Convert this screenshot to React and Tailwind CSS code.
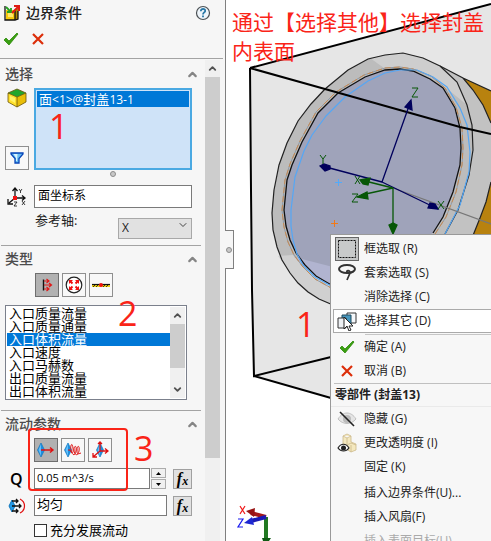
import React from "react";
import { ChevronDown, ChevronUp } from "lucide-react";

const ui = "font-['Open_Sans','Noto_Sans_CJK_SC',sans-serif]";

function Check() {
  return (
    <svg width="16" height="14" viewBox="0 0 16 14" aria-hidden="true">
      <path d="M1 8 3 6l3 3 8-8 1 1-9 11Z" fill="#3a9f12" stroke="#2c8a08" strokeWidth=".8" />
    </svg>
  );
}

function Cross() {
  return (
    <svg width="12" height="12" viewBox="0 0 12 12" aria-hidden="true">
      <path d="M1 1l10 10M11 1 1 11" stroke="#dc2e0a" strokeWidth="2.2" />
    </svg>
  );
}

function TitleIcon() {
  return (
    <svg width="16" height="16" viewBox="0 0 16 16" aria-hidden="true">
      <path d="M2 5h9v10H2z" fill="#f7c90c" />
      <path d="M11 5l3-2v11l-3 1z" fill="#ad8500" />
      <path d="M4 7h5v5H4z" fill="#ffe769" />
      <path d="M1 1v14h10l3-1V6M11 6v9" stroke="#111" strokeWidth="1.3" fill="none" />
      <path d="M2 2l5 5M3 7h4V3" stroke="#25a020" strokeWidth="1.8" fill="none" />
      <path d="M8 8l6-6M10 1h5v5" stroke="#df1a12" strokeWidth="2" fill="none" />
    </svg>
  );
}

function HelpIcon() {
  return (
    <svg width="16" height="16" viewBox="0 0 16 16" aria-hidden="true">
      <circle cx="8" cy="8" r="6.5" fill="#eef5fb" stroke="#4b5054" strokeWidth="1.2" />
      <path d="M5.8 6.2c0-3.1 4.8-2.8 4.4-.2C10 7.4 8 7.6 8 9.4" fill="none" stroke="#2676a5" strokeWidth="1.7" />
      <path d="M7.1 10.6h1.8v1.7H7.1z" fill="#2676a5" />
    </svg>
  );
}

function CubeIcon() {
  return (
    <svg width="20" height="20" viewBox="0 0 20 20" aria-hidden="true">
      <path d="M1 5l9 4v10l-9-5z" fill="#ffe02b" />
      <path d="M19 5l-9 4v10l9-5z" fill="#e9be08" />
      <path d="M1 5l9-4 9 4-9 4z" fill="#22a62c" />
      <path d="M1 5l9-4 9 4v9l-9 5-9-5zM10 9v10M1 5l9 4 9-4" fill="none" stroke="#6c5408" strokeWidth=".8" />
      <path d="M3 8l5 2v5l-5-3z" fill="#fff36b" />
    </svg>
  );
}

function FilterIcon() {
  return (
    <svg width="14" height="14" viewBox="0 0 14 14" aria-hidden="true">
      <path d="M1 2h12v1L9 7.5V12H5V7.5L1 3z" fill="#66bdf2" stroke="#0744b8" strokeWidth="1.3" />
      <path d="M3.5 3h4L7 10H6V7z" fill="#d8f3ff" />
    </svg>
  );
}

function AxesIcon() {
  return (
    <svg width="20" height="20" viewBox="0 0 20 20" aria-hidden="true">
      <path d="M8 11V1M5.5 4 8 1l2.5 3M8 11h9M15 8.5l3 2.5-3 2.5M8 11l-6 5M1 12v5h5" fill="none" stroke="#111" strokeWidth="1.3" />
      <path d="M12 2l1.500 2L15 2M13.500 4v2M15 14l3 4M18 14l-3 4M7 15h3l-3 4h3" fill="none" stroke="#111" strokeWidth=".8" />
      <path d="M6 9h4v4H6z" fill="#f01010" />
    </svg>
  );
}

function InletIcon() {
  return (
    <svg width="16" height="16" viewBox="0 0 16 16" aria-hidden="true">
      <path d="M4.500 2.500v11" stroke="#111" strokeWidth="1.4" />
      <path d="M5 4h4M5 8h7M5 12h4M7.500 2l2.500 2-2.500 2M10 6l2.500 2-2.500 2M7.500 10l2.500 2-2.500 2" fill="none" stroke="#e01818" strokeWidth="1.2" />
    </svg>
  );
}

function PressureIcon() {
  return (
    <svg width="18" height="18" viewBox="0 0 18 18" aria-hidden="true">
      <circle cx="9" cy="9" r="7.800" fill="#fff" stroke="#222" strokeWidth="1.200" />
      <path d="M7.500 7.500l-3-3M10.500 7.500l3-3M7.500 10.500l-3 3M10.500 10.500l3 3" fill="none" stroke="#f01010" strokeWidth="2" />
      <path d="M4 4h4L4 8zM14 4v4l-4-4zM14 14h-4l4-4zM4 14v-4l4 4z" fill="#f01010" />
    </svg>
  );
}

function WallIcon() {
  return (
    <svg width="20" height="10" viewBox="0 0 20 10" aria-hidden="true">
      <path d="M1 5h18v2H1z" fill="#edd016" />
      <path d="M1 4.500h18" stroke="#111" strokeWidth="1.200" />
      <path d="M2 7l2-2M5 7l2-2M12 7l2-2M15 7l2-2" stroke="#111" strokeWidth=".8" />
      <circle cx="10" cy="5" r="2" fill="#f01010" />
    </svg>
  );
}

function FlowIcon({ kind }) {
  const cx = kind === "vector" ? 9 : 4;
  return (
    <svg width="18" height="18" viewBox="0 0 18 18" aria-hidden="true">
      <path d={`M${cx} 2l3.500 7-3.500 7-3.500-7z`} fill="#1c8fe0" stroke="#1177bd" strokeWidth=".7" />
      <path d={`M${cx} 3v12l-2.500-6z`} fill="#63bffa" />
      {kind === "normal" && <path d="M4 9h12M13 6.500 16 9l-3 2.500" fill="none" stroke="#e01010" strokeWidth="1.400" />}
      {kind === "swirl" && (
        <path d="M4 9h2c1 3 4 5 3-2s-3-2-2 2c1 5 4 7 5 1s-2-6-2-1 4 7 5 1-2-6-2-1 1 4 4 3" fill="none" stroke="#e01010" />
      )}
      {kind === "vector" && (
        <path d="M9 10V1M7 3l2-2 2 2M9 10h8M14 7.500l3 2.500-3 2.500M9 10l-7 6M2 12v4h4" fill="none" stroke="#e01010" strokeWidth="1.300" />
      )}
    </svg>
  );
}

function ProfileIcon() {
  return (
    <svg width="18" height="16" viewBox="0 0 18 16" aria-hidden="true">
      <path d="M4 2l3 6-3 6-3-6z" fill="#239be8" stroke="#1177bd" />
      <path d="M4 3h6M4 8h9M4 13h6M8 1l2 2-2 2M11 6l2 2-2 2M8 11l2 2-2 2" fill="none" stroke="#111" strokeWidth="1.300" />
      <path d="M12 1c6 3 6 11 0 14" fill="none" stroke="#e01010" strokeWidth="1.200" />
    </svg>
  );
}

function Section({ title, children, last }) {
  return (
    <section className={`ml-px mr-1 pt-px ${last ? "" : "border-b border-[#a3a3a3] pb-[10px]"}`}>
      <button type="button" className="mb-[2px] flex h-6 w-full items-center justify-between pl-1 pr-[2px] text-sm font-medium text-[#4b4b4b]">
        <span>{title}</span>
        <ChevronUp size={13} strokeWidth={4} color="#858585" />
      </button>
      <div className="pl-1 pr-[9px]">{children}</div>
    </section>
  );
}

function Tool({ active, label, children }) {
  return (
    <button
      type="button"
      aria-label={label}
      className={`flex size-6 shrink-0 items-center justify-center border ${active ? "border-[#6e6e6e] bg-[#b1b1b1]" : "border-[#8f8f8f] bg-[#f8f8f8]"}`}
    >
      {children}
    </button>
  );
}

function FxButton() {
  return (
    <button type="button" aria-label="函数" className="flex h-5 w-[19px] shrink-0 items-center justify-center border border-[#a0a0a0] bg-[#e1e1e1] font-['Liberation_Serif',serif] font-bold italic leading-none text-black">
      <span className="text-base leading-none">f</span>
      <span className="pt-1 text-xs leading-none">x</span>
    </button>
  );
}

const types = ["入口质量流量", "入口质量通量", "入口体积流量", "入口速度", "入口马赫数", "出口质量流量", "出口体积流量"];

function Panel() {
  return (
    <aside className="flex w-[226px] shrink-0 flex-col border-r border-[#808080] bg-[#f6f6f6]">
      <header className="mr-[2px] h-[59px] shrink-0 border-b border-[#a3a3a3]">
        <div className="flex h-[25px] items-center pl-1 pr-3">
          <TitleIcon />
          <h1 className="ml-[6px] flex-1 text-sm font-medium text-[#222]">边界条件</h1>
          <button type="button" aria-label="帮助"><HelpIcon /></button>
        </div>
        <div className="flex h-7 items-center gap-[13px] pl-[3px]">
          <button type="button" aria-label="确定"><Check /></button>
          <button type="button" aria-label="取消"><Cross /></button>
        </div>
      </header>
      <div className="flex min-h-0 flex-1 pt-px">
        <div className="min-w-0 flex-1 overflow-hidden pt-px">
          <Section title="选择">
            <div className="grid grid-cols-[29px_1fr]">
              <div className="flex flex-col justify-between">
                <div className="pl-[2px]"><CubeIcon /></div>
                <Tool label="过滤器"><FilterIcon /></Tool>
              </div>
              <ul role="listbox" aria-label="选择" className="h-[82px] border-2 border-[#4aa9e2] bg-[#cfe3f8] p-px">
                <li role="option" aria-selected="true" className="h-4 bg-[#0078d7] pl-[2px] text-[13px] leading-4 text-white">
                  面<span className="text-xs leading-none">&lt;1&gt;@</span>封盖<span className="text-xs leading-none">13-1</span>
                </li>
              </ul>
            </div>
            <div className="flex h-[15px] justify-center pl-7 pt-px">
              <span className="size-[6px] rounded-full border border-[#8c8c8c] bg-[#c8c8c8]" />
            </div>
            <div className="grid grid-cols-[29px_1fr] items-center">
              <div className="pl-[2px]"><AxesIcon /></div>
              <input aria-label="坐标系" defaultValue="面坐标系" className="h-[23px] w-full min-w-0 border border-[#7a7a7a] bg-white px-[3px] pb-1 text-xs text-black" />
            </div>
            <div className="mt-[6px] flex h-[21px] justify-between pl-[30px]">
              <label htmlFor="axis" className="text-[13px] leading-3 text-[#222]">参考轴:</label>
              <div className="relative w-[74px]">
                <select id="axis" className="h-[21px] w-full appearance-none border border-[#a8a8a8] bg-[#e1e1e1] pl-[3px] text-xs leading-none text-[#222]">
                  <option>X</option>
                </select>
                <ChevronDown size={12} color="#444" className="pointer-events-none absolute right-[3px] top-[5px]" />
              </div>
            </div>
          </Section>
          <Section title="类型">
            <div className="flex gap-[3px] pl-[30px]">
              <Tool active label="流动开口"><InletIcon /></Tool>
              <Tool label="压力开口"><PressureIcon /></Tool>
              <Tool label="壁面"><WallIcon /></Tool>
            </div>
            <div className="mr-[5px] mt-2 flex h-[95px] border border-[#7b808c] bg-white p-px">
              <ul role="listbox" aria-label="类型" className="min-w-0 flex-1">
                {types.map((t, i) => (
                  <li key={t} role="option" aria-selected={i === 2} className={`h-[13px] pl-[2px] text-[13px] leading-[13px] ${i === 2 ? "bg-[#0078d7] text-white" : "text-black"}`}>
                    {t}
                  </li>
                ))}
              </ul>
              <div className="flex w-[15px] flex-col bg-[#f0f0f0]">
                <span className="flex h-[17px] items-center justify-center"><ChevronUp size={11} strokeWidth={4} color="#505050" /></span>
                <span className="h-11 bg-[#cdcdcd]" />
                <span className="flex flex-1 items-end justify-center pb-[3px]"><ChevronDown size={11} strokeWidth={4} color="#505050" /></span>
              </div>
            </div>
          </Section>
          <Section title="流动参数" last>
            <div className="flex gap-[3px] pl-[29px]">
              <Tool active label="法向"><FlowIcon kind="normal" /></Tool>
              <Tool label="旋转"><FlowIcon kind="swirl" /></Tool>
              <Tool label="三维矢量"><FlowIcon kind="vector" /></Tool>
            </div>
            <div className="mt-[6px] grid grid-cols-[29px_1fr_19px] items-center">
              <label htmlFor="rate" className="pl-[5px] text-base font-semibold leading-4 text-black">Q</label>
              <div className="flex gap-px pr-[7px]">
                <input id="rate" defaultValue="0.05 m^3/s" className="h-[21px] w-full min-w-0 border border-[#7a7a7a] bg-white px-[2px] pb-[3px] text-[11px] text-black" />
                <div className="flex w-[15px] shrink-0 flex-col gap-px">
                  <button type="button" aria-label="增加" className="flex h-[10px] items-center justify-center border border-[#acacac] bg-[#f0f0f0]">
                    <svg width="5" height="3"><path d="M0 3 2.500 0 5 3z" /></svg>
                  </button>
                  <button type="button" aria-label="减少" className="flex h-[10px] items-center justify-center border border-[#acacac] bg-[#f0f0f0]">
                    <svg width="5" height="3"><path d="M0 0h5L2.500 3z" /></svg>
                  </button>
                </div>
              </div>
              <FxButton />
            </div>
            <div className="mt-[6px] grid grid-cols-[29px_1fr_19px] items-center">
              <div className="pl-[3px]"><ProfileIcon /></div>
              <div className="flex pr-[6px]">
                <input aria-label="流动分布" defaultValue="均匀" className="h-[21px] w-full min-w-0 border border-[#7a7a7a] bg-white px-[2px] pb-1 text-[13px] text-black" />
              </div>
              <FxButton />
            </div>
            <label className="mt-[6px] flex h-4 items-center gap-[3px] pl-[29px] text-[13px] leading-4 text-black">
              <input type="checkbox" className="size-[13px] appearance-none border border-[#333] bg-white" />
              充分发展流动
            </label>
          </Section>
        </div>
        <div className="mr-[5px] flex w-[15px] shrink-0 flex-col bg-[#f0f0f0]">
          <span className="flex h-[17px] items-center justify-center"><ChevronUp size={11} strokeWidth={4} color="#505050" /></span>
          <span className="h-[381px] bg-[#cdcdcd]" />
        </div>
      </div>
    </aside>
  );
}

const outerRim = "445,234 458,210 469,175 473,150 472,125 467,105 457,82 440,66 423,58 403,53 385,55 368,59 348,70 325,89 311,104 298,121 287,143 279,165 274,190 272,213 273,230 277,247 282,260 290,273 298,283 308,292 319,299 333,305";
const innerRim = "433,233 443,217 453,192 460,165 461,148 460,128 455,108 443,88 430,79 413,71 400,69 385,70 365,77 338,93 318,113 302,142 292,165 287,180 284,210 286,226 290,240 296,253 305,265 316,276 333,286";
const seam = "435,234 446,217 456,192 462,165 463,148 462,128 456,107 445,88 431,76 413,69 400,67 385,68 364,75 336,92 316,112 300,141 290,164 285,180 282,210 284,227 288,242 294,255 303,267 315,279 333,289";
const edge = "445,234 460,205 469,172 470,152 467,125 460,108 447,87 433,77 417,70 400,70 385,73 368,81 345,97 326,116 312,135 304,151 295,177 291,210 291,226 293,240 297,254 303,265 315,277 333,287";

function Scene() {
  return (
    <svg className="absolute left-0 top-0" width="265" height="541" viewBox="226 0 265 541" aria-hidden="true">
      <path d="M250 68 491 4v420l-160-26-77-22-2-76z" fill="#e6e6e6" />
      <path d="M463 78l28 13v150h-35z" fill="#b8820f" />
      <path d="M440 66l23 12 10 12 10 15 8 18v59l-5 20-6 16-8 20h-40z" fill="#c2c2c2" />
      <path d="M440 66l23 12 10 12 10 15 8 18M491 182l-5 20-6 16-8 20M463 78l28 13" fill="none" stroke="#222" strokeWidth="1.200" />
      <polygon points={outerRim} fill="#bcbcbc" />
      <path d="M370 58l33-5 20 5 17 8 17 16 10 23-33-27-20-9-18-1-12 0z" fill="#cecece" />
      <path d="M278 256l15-1 12 14 28 17v19l-14-6-21-16z" fill="#d0d0d0" />
      <polygon points={innerRim} fill="#9fa3ba" />
      <path d="M294 257l39 10v19l-16-10z" fill="#b1b4d0" />
      <polyline points={outerRim} fill="none" stroke="#222" strokeWidth="1.200" />
      <polyline points={innerRim} fill="none" stroke="#111" strokeWidth="1.300" />
      <polyline points={seam} fill="none" stroke="#8d9aa8" />
      <polyline points={seam} fill="none" stroke="#c98a50" strokeDasharray="6 3" />
      <polyline points={edge} fill="none" stroke="#55a7f5" strokeWidth="1.200" strokeLinejoin="round" />
      <path d="M250 68 491 4M250 68l75 21 135 38 31 7M250 68l1 122 1 100 2 86 77-19M254 376l77 22" fill="none" stroke="#000" strokeWidth="2" />
      <path d="M393 188l98 36" stroke="#777" strokeWidth="1.300" />
      <g stroke="#00005c" strokeWidth="1.300" fill="#00005c">
        <path d="M382 182 409 106M382 182l-60-16M382 182l56 27" fill="none" />
        <path d="M411 100l1 10-7-3zM320 166l4-2 6 2v3l-5 2zM438 209l-10-1 2-5 5 1z" />
      </g>
      <g stroke="#075707" strokeWidth="1.300" fill="#075707">
        <path d="M393 188l-32-8M393 188l-32 7M393 188v41" fill="none" />
        <path d="M360 180l10-2-2 7-5-1zM357 197l10-5 1 7zM393 234l-4-9 4-2 4 2z" />
        <path d="M412 88h6l-6 9h6M320 155l3 4 3-4M323 159v5M355 176l5 8M360 176l-5 8M352 194h6l-6 8h6M438 201l6 8M444 201l-6 8" fill="none" strokeWidth="1" />
      </g>
      <path d="M338.500 179v7M335 182.500h7" stroke="#52aafa" />
      <path d="M334.500 220v7M331 223.500h7" stroke="#f27917" />
      <path d="M266 517v24" stroke="#217822" strokeWidth="4" />
      <path d="M262 538h9l-2 3h-6z" fill="#105a14" />
      <path d="M266 517l-15-4" stroke="#a51919" strokeWidth="4" />
      <path d="M246 511l9-3-1 9z" fill="#981313" />
      <path d="M266 517l-15 4" stroke="#1b1bb5" strokeWidth="4" />
      <path d="M244 523l8-6 2 8z" fill="#1d27d2" />
      <path d="M240 506l5 8M245 506l-5 8" stroke="#f01818" strokeWidth="1.200" />
      <path d="M238 519h5l-5 8h5" fill="none" stroke="#1818ef" strokeWidth="1.200" />
    </svg>
  );
}

function BoxIcon() {
  return (
    <span className="flex size-6 items-center justify-center border border-[#666] bg-[#c4c6c6]">
      <svg width="20" height="20" viewBox="0 0 20 20"><path d="M1.500 1.500h17v17h-17z" fill="#c8caca" stroke="#111" strokeDasharray="2 1" /></svg>
    </span>
  );
}

function LassoIcon() {
  return (
    <svg width="20" height="20" viewBox="0 0 20 20">
      <ellipse cx="10" cy="6" rx="8" ry="4" fill="none" stroke="#333" strokeWidth="2" />
      <path d="M17 8c-3 2-6 3-7 1s3-2 3 1l-3 7" fill="none" stroke="#333" strokeWidth="1.700" />
    </svg>
  );
}

function SelectOtherIcon() {
  return (
    <svg width="20" height="20" viewBox="0 0 20 20">
      <path d="M10 2h9v10h-9z" fill="#f5f8fb" stroke="#333" />
      <path d="M5 4h9v10H5z" fill="#4696bd" stroke="#1d485c" />
      <path d="M1 7h8v10H1z" fill="#eef1f4" stroke="#333" />
      <path d="M7 6v12l3-3 2 5 2-1-2-4h4z" fill="#fff" stroke="#222" />
    </svg>
  );
}

function HideIcon() {
  return (
    <svg width="20" height="18" viewBox="0 0 20 18">
      <path d="M1 9c5-8 13-8 18 0-5 6-13 6-18 0z" fill="#e5e5e5" stroke="#c0c0c0" />
      <circle cx="10" cy="9" r="4" fill="#bbb" />
      <path d="M3 2l14 14" stroke="#222" strokeWidth="1.600" />
    </svg>
  );
}

function TransparencyIcon() {
  return (
    <svg width="20" height="20" viewBox="0 0 20 20">
      <path d="M6 3l4-2 4 2v6l5 2v6l-5 2-8-5zM6 3l4 2 4-2M10 5v7M10 12l4-2 5 2M14 12v7" fill="#f4e8bf" stroke="#ccb98a" strokeWidth=".8" />
      <path d="M1 15c3-5 8-5 11 0-3 4-8 4-11 0z" fill="#fff" stroke="#222" strokeWidth="1.200" />
      <circle cx="6.500" cy="15" r="2.500" fill="#222" />
    </svg>
  );
}

function Item({ icon, children, hot, muted }) {
  return (
    <button
      type="button"
      role="menuitem"
      className={`ml-[2px] flex h-6 shrink-0 items-center whitespace-nowrap border-y border-l pl-px text-left ${hot ? "border-[#aaa] bg-white" : "border-transparent"} ${muted ? "text-[#aaa]" : "text-[#222]"}`}
    >
      <span className="mr-[5px] flex w-6 shrink-0 justify-center">{icon}</span>
      <span className="text-xs">{children}</span>
    </button>
  );
}

function ContextMenu() {
  return (
    <div role="menu" className="absolute bottom-0 left-[104px] right-0 top-[234px] flex flex-col overflow-hidden border-l border-t border-[#999] bg-[#f7f7f7] pt-[2px]">
      <Item icon={<BoxIcon />}>框选取 (R)</Item>
      <Item icon={<LassoIcon />}>套索选取 (S)</Item>
      <Item>消除选择 (C)</Item>
      <Item hot icon={<SelectOtherIcon />}>选择其它 (D)</Item>
      <div className="ml-[34px] h-[2px] shrink-0 border-b border-[#c6c6c6]" />
      <Item icon={<Check />}>确定 (A)</Item>
      <Item icon={<Cross />}>取消 (B)</Item>
      <div className="ml-[3px] h-px shrink-0 bg-[#c0c0c0]" />
      <h2 className="flex h-[23px] shrink-0 items-center border-b border-[#eaeaea] pl-1 text-xs font-bold text-[#222]">零部件 (封盖13)</h2>
      <Item icon={<HideIcon />}>隐藏 (G)</Item>
      <Item icon={<TransparencyIcon />}>更改透明度 (I)</Item>
      <Item>固定 (K)</Item>
      <div className="h-[2px] shrink-0" />
      <Item>插入边界条件(U)...</Item>
      <Item>插入风扇(F)</Item>
      <Item muted>插入表面目标(U)</Item>
    </div>
  );
}

export default function App() {
  return (
    <div className={`relative flex h-screen w-full overflow-hidden bg-white ${ui}`}>
      <Panel />
      <main className="relative min-w-0 flex-1 overflow-hidden">
        <Scene />
        <p className="absolute left-[6px] right-0 top-2 text-[21px] leading-[29px] text-[#fa2418]">
          通过【选择其他】选择封盖<br />内表面
        </p>
        <span className="absolute left-[70px] top-[306px] text-[34px] leading-9 text-[#fa2418]">1</span>
        <ContextMenu />
      </main>
      <div className="absolute left-[225px] top-[230px] flex h-[39px] w-[9px] items-center justify-center border-y border-r border-[#808080] bg-[#f6f6f6]">
        <span className="size-[6px] rounded-full border border-[#8c8c8c] bg-[#c8c8c8]" />
      </div>
      <span className="absolute left-[49px] top-[108px] text-[34px] leading-9 text-[#fa2418]">1</span>
      <span className="absolute left-[118px] top-[295px] text-[34px] leading-9 text-[#fa2418]">2</span>
      <span className="absolute left-[134px] top-[430px] text-[34px] leading-9 text-[#fa2418]">3</span>
      <div className="pointer-events-none absolute left-7 top-[428px] h-[63px] w-[100px] rounded border-2 border-[#fa2418]" />
    </div>
  );
}
